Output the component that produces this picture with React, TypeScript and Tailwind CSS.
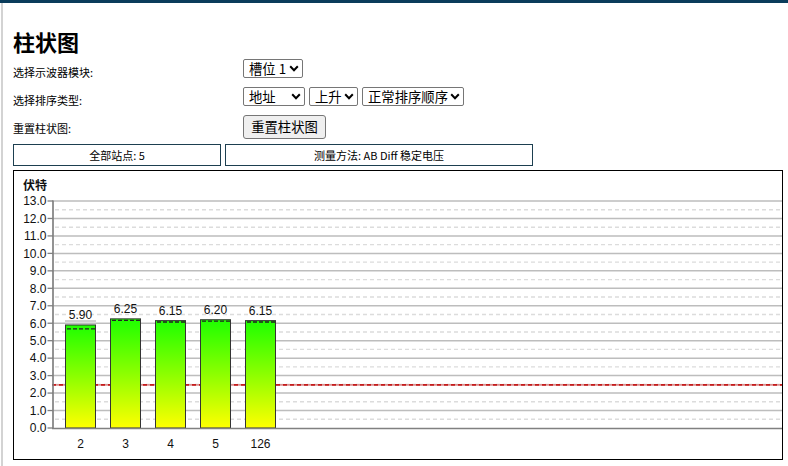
import React from "react";

const K = 227 / 13;
const yOf = (v: number) => 428 - v * K;

const bars = [
  { label: "2", v: 5.9, x: 65, dash: 5.68 },
  { label: "3", v: 6.25, x: 110, dash: 6.16 },
  { label: "4", v: 6.15, x: 155, dash: 6.07 },
  { label: "5", v: 6.2, x: 200, dash: 6.12 },
  { label: "126", v: 6.15, x: 245, dash: 6.07 },
];

function Chevron() {
  return (
    <svg width="10" height="7" viewBox="0 0 10 7" className="pointer-events-none absolute right-[4px] top-[6px]">
      <path d="M1.2 1.3 L5 5.2 L8.8 1.3" fill="none" stroke="#000" strokeWidth="2" />
    </svg>
  );
}

function Sel({ w, options }: { w: string; options: string[] }) {
  return (
    <div className={`relative ${w} h-[19px]`}>
      <select className="block h-[19px] w-full appearance-none rounded-[2px] border border-[#767676] bg-white py-0 pl-[5px] text-[13.333px] leading-[17px] text-black outline-none [font-family:'Noto_Sans_CJK_SC','Noto_Sans',sans-serif]">
        {options.map((o) => (
          <option key={o}>{o}</option>
        ))}
      </select>
      <Chevron />
    </div>
  );
}

function Chart() {
  const solid: number[] = [];
  const dashed: number[] = [];
  for (let i = 1; i <= 13; i++) solid.push(i);
  for (let i = 0; i < 13; i++) dashed.push(i + 0.5);
  const ticks: number[] = [];
  for (let i = 0; i <= 13; i++) ticks.push(i);
  const font = "'Liberation Sans', Arial, sans-serif";
  return (
    <svg width="768" height="288" viewBox="0 0 768 288" className="block">
      <defs>
        <linearGradient id="barg" x1="0" y1="0" x2="0" y2="1">
          <stop offset="0" stopColor="#1eff00" />
          <stop offset="0.5" stopColor="#8cff00" />
          <stop offset="1" stopColor="#ffff00" />
        </linearGradient>
      </defs>
      <g transform="translate(-14,-171)">
        <text x="23" y="190" fontSize="12" fontWeight="600" fontFamily="'Noto Sans CJK SC', sans-serif" fill="#111">
          伏特
        </text>
        {dashed.map((v) => (
          <line key={"d" + v} x1="55" x2="781" y1={yOf(v)} y2={yOf(v)} stroke="#dcdcdc" strokeWidth="1.4" strokeDasharray="4 3" />
        ))}
        {solid.map((v) => (
          <line key={"s" + v} x1="52" x2="783" y1={yOf(v)} y2={yOf(v)} stroke="#bdbdbd" strokeWidth="1.5" />
        ))}
        <line x1="52" x2="783" y1={yOf(2.5) + 0.5} y2={yOf(2.5) + 0.5} stroke="#d99090" strokeWidth="1.8" />
        <line x1="52" x2="783" y1={yOf(2.5) + 0.5} y2={yOf(2.5) + 0.5} stroke="#c41c1c" strokeWidth="1.8" strokeDasharray="4 3" />
        {bars.map((b) => {
          const top = yOf(b.v);
          return (
            <g key={b.label}>
              <rect x={b.x + 0.5} y={top} width="30" height={428 - top} fill="url(#barg)" stroke="#333" strokeWidth="1" />
              <line x1={b.x + 2} x2={b.x + 30} y1={yOf(b.dash)} y2={yOf(b.dash)} stroke="#222" strokeWidth="1.3" strokeDasharray="4 2" />
              <text x={b.x + 15.5} y={top - 5.5} fontSize="12" fontFamily={font} textAnchor="middle" fill="#111">
                {b.v.toFixed(2)}
              </text>
              <text x={b.x + 15.5} y="448" fontSize="12" fontFamily={font} textAnchor="middle" fill="#111">
                {b.label}
              </text>
            </g>
          );
        })}
        <line x1={65} x2={96} y1={321} y2={321} stroke="#888" strokeWidth="0.8" />
        {ticks.map((v) => (
          <g key={"t" + v}>
            <line x1="47.5" x2="53" y1={yOf(v)} y2={yOf(v)} stroke="#808080" strokeWidth="1.3" />
            <text x="46.5" y={yOf(v) + 4.3} fontSize="12" fontFamily={font} textAnchor="end" fill="#111">
              {v.toFixed(1)}
            </text>
          </g>
        ))}
        <line x1="53" x2="53" y1={yOf(13) - 0.5} y2="429" stroke="#808080" strokeWidth="1.7" />
        <line x1="52" x2="783" y1="428.5" y2="428.5" stroke="#808080" strokeWidth="1.6" />
      </g>
    </svg>
  );
}

export default function App() {
  return (
    <div className="relative h-[466px] w-[788px] overflow-hidden bg-white text-black [font-family:'Noto_Sans_CJK_SC','Noto_Sans',sans-serif]">
      <div className="h-[3px] bg-[#0a3c5b]" />
      <div className="ml-[1px] h-[463px] border-l-2 border-[#d3d3d3] pl-[10px]">
        <div className="pt-[25px]">
          <h1 className="h-[26px] text-[22px] font-bold leading-[26px]">柱状图</h1>
        </div>
        <div className="mt-[5px] flex h-[19px] items-start">
          <div className="mt-[6px] w-[230px] text-[11px] leading-[14px]">选择示波器模块:</div>
          <Sel w="w-[60px]" options={["槽位 1"]} />
        </div>
        <div className="mt-[9px] flex h-[19px] items-start">
          <div className="mt-[6px] w-[230px] text-[11px] leading-[14px]">选择排序类型:</div>
          <div className="flex gap-[4px]">
            <Sel w="w-[62px]" options={["地址"]} />
            <Sel w="w-[49px]" options={["上升"]} />
            <Sel w="w-[102px]" options={["正常排序顺序"]} />
          </div>
        </div>
        <div className="mt-[9px] flex h-[24px] items-start">
          <div className="mt-[6px] w-[230px] text-[11px] leading-[14px]">重置柱状图:</div>
          <button className="h-[24px] w-[83px] rounded-[3px] border border-[#767676] bg-[#efefef] text-[13.333px] leading-[20px] text-black">
            重置柱状图
          </button>
        </div>
        <div className="mt-[5px] flex h-[22px] gap-[4px]">
          <div className="flex w-[208px] items-center justify-center border border-[#1d3f50] text-[11px]">全部站点: 5</div>
          <div className="flex w-[308px] items-center justify-center border border-[#1d3f50] text-[11px]">测量方法: AB Diff 稳定电压</div>
        </div>
        <div className="mt-[4px] h-[290px] w-[770px] border border-black">
          <Chart />
        </div>
      </div>
    </div>
  );
}
